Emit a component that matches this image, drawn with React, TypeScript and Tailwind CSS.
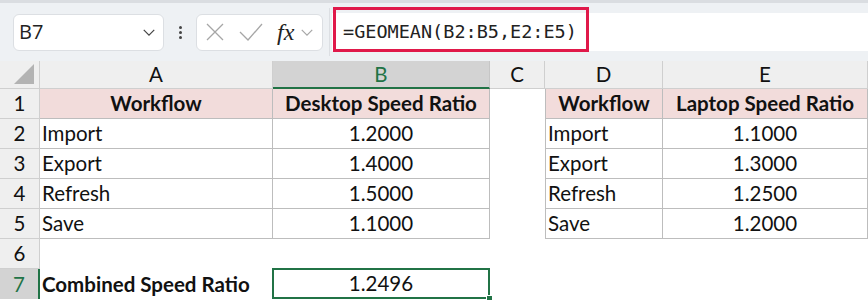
import React from 'react';

const cols = ['A', 'B', 'C', 'D', 'E'];

type Cell = {
  text?: string;
  bold?: boolean;
  align?: 'left' | 'center';
  fill?: boolean;
  border?: boolean;
  selected?: boolean;
};

const rows: Cell[][] = [
  [
    { text: 'Workflow', bold: true, align: 'center', fill: true, border: true },
    { text: 'Desktop Speed Ratio', bold: true, align: 'center', fill: true, border: true },
    {},
    { text: 'Workflow', bold: true, align: 'center', fill: true, border: true },
    { text: 'Laptop Speed Ratio', bold: true, align: 'center', fill: true, border: true },
  ],
  [
    { text: 'Import', border: true },
    { text: '1.2000', align: 'center', border: true },
    {},
    { text: 'Import', border: true },
    { text: '1.1000', align: 'center', border: true },
  ],
  [
    { text: 'Export', border: true },
    { text: '1.4000', align: 'center', border: true },
    {},
    { text: 'Export', border: true },
    { text: '1.3000', align: 'center', border: true },
  ],
  [
    { text: 'Refresh', border: true },
    { text: '1.5000', align: 'center', border: true },
    {},
    { text: 'Refresh', border: true },
    { text: '1.2500', align: 'center', border: true },
  ],
  [
    { text: 'Save', border: true },
    { text: '1.1000', align: 'center', border: true },
    {},
    { text: 'Save', border: true },
    { text: '1.2000', align: 'center', border: true },
  ],
  [{}, {}, {}, {}, {}],
  [
    { text: 'Combined Speed Ratio', bold: true },
    { text: '1.2496', align: 'center', selected: true },
    {},
    {},
    {},
  ],
];

function Chevron({ className }: { className?: string }) {
  return (
    <svg className={className} viewBox="0 0 16 10" fill="none" stroke="currentColor" strokeWidth={1.4}>
      <path d="M2 2l6 6 6-6" />
    </svg>
  );
}

export default function App() {
  return (
    <div className="w-[868px] h-[300px] overflow-hidden bg-white font-['Lato','Liberation_Sans',sans-serif] text-[#111]">
      {/* toolbar */}
      <div className="relative h-[61px] bg-[#eef1f4] border-t-[3px] border-[#dadde1] flex items-center">
        <div className="ml-[13px] w-[151px] h-[37px] bg-white rounded-[6px] border border-[#dcdfe3] flex items-center justify-between pl-[5px] pr-[7px] font-['Open_Sans','Liberation_Sans',sans-serif] text-[20px] text-[#222]">
          <span>B7</span>
          <Chevron className="w-[14px] h-[9px] text-[#444]" />
        </div>
        <div className="w-[32px] flex flex-col items-center gap-[2px]">
          <span className="w-[3px] h-[3px] bg-[#444] rounded-full" />
          <span className="w-[3px] h-[3px] bg-[#444] rounded-full" />
          <span className="w-[3px] h-[3px] bg-[#444] rounded-full" />
        </div>
        <div className="w-[127px] h-[37px] bg-white rounded-[6px] border border-[#dcdfe3] flex items-center pl-[9px] text-[#a6a6a6]">
          <svg className="w-[18px] h-[18px]" viewBox="0 0 18 18" fill="none" stroke="currentColor" strokeWidth={1.3}>
            <path d="M1 1l16 16M17 1L1 17" />
          </svg>
          <svg className="ml-[15px] w-[24px] h-[18px]" viewBox="0 0 24 18" fill="none" stroke="currentColor" strokeWidth={1.3}>
            <path d="M1 9l8 8L23 1" />
          </svg>
          <span className="ml-[14px] font-['Liberation_Serif',serif] italic text-[24px] text-[#222] leading-none">fx</span>
          <Chevron className="ml-[6px] w-[14px] h-[9px] text-[#a6a6a6]" />
        </div>
        <div className="ml-[6px] h-[48px] w-[1px] bg-[#dcdfe3]" />
        <div className="ml-[2px] flex-1 h-[38px] bg-white flex items-center pl-[11px] font-['DejaVu_Sans_Mono',monospace] text-[18.5px] text-[#222]">
          =GEOMEAN(B2:B5,E2:E5)
        </div>
        <div className="absolute left-[333px] top-[4px] w-[256px] h-[45px] border-[3px] border-[#e0194a]" />
      </div>

      {/* sheet */}
      <div className="grid grid-cols-[40px_233px_217px_55px_118px_205px] grid-rows-[28px_repeat(7,30px)] text-[20.5px]">
        <div className="bg-[#efefef] border-r border-b border-[#cfcfcf] flex items-end justify-end pr-[5px] pb-[4px]">
          <svg className="w-[20px] h-[20px]" viewBox="0 0 20 20">
            <path d="M20 0V20H0z" fill="#b3b3b3" />
          </svg>
        </div>
        {cols.map((c) => (
          <div
            key={c}
            className={
              c === 'B'
                ? 'bg-[#d3d3d3] text-[#217346] border-r border-[#c6c6c6] border-b-2 border-b-[#217346] flex items-center justify-center'
                : 'bg-[#efefef] text-[#111] border-r border-b border-[#cfcfcf] flex items-center justify-center'
            }
          >
            {c}
          </div>
        ))}
        {rows.map((row, ri) => (
          <React.Fragment key={ri}>
            <div
              className={
                ri === 6
                  ? 'bg-[#d3d3d3] text-[#217346] border-r-2 border-[#217346] flex items-center justify-center'
                  : 'bg-[#efefef] border-r border-b border-[#cfcfcf] flex items-center justify-center text-[#111]'
              }
            >
              {ri + 1}
            </div>
            {row.map((cell, ci) => {
              let cls = 'relative flex items-center px-[2px] whitespace-nowrap ';
              cls += cell.align === 'center' ? 'justify-center ' : 'justify-start ';
              if (cell.bold) cls += 'font-bold ';
              if (cell.fill) cls += 'bg-[#f2dcdb] ';
              if (cell.border) {
                cls += 'border-r border-b border-[#bdbdbd] ';
                if (ci === 3) cls += 'border-l ';
              }
              if (cell.selected) cls += 'border-2 border-[#217346] -ml-[1px] -mt-[1px] ';
              return (
                <div key={ci} className={cls}>
                  {cell.text}
                  {cell.selected && (
                    <span className="absolute -right-[5px] -bottom-[5px] w-[7px] h-[7px] bg-[#217346] border border-white" />
                  )}
                </div>
              );
            })}
          </React.Fragment>
        ))}
      </div>
    </div>
  );
}
